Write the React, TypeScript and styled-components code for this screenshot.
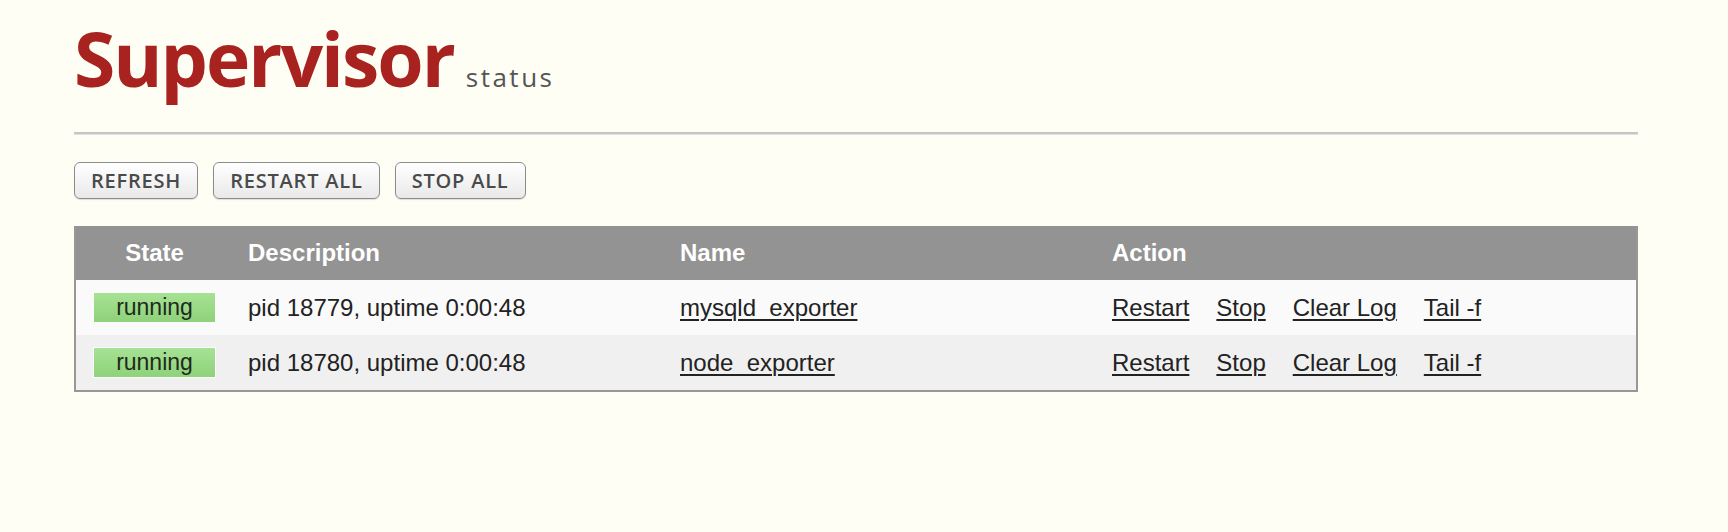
import styled, { createGlobalStyle } from 'styled-components';

const GlobalStyle = createGlobalStyle`
    html, body {
        margin: 0;
        padding: 0;
        background: #fefef4;
        font-family: "Liberation Sans", Arial, Helvetica, sans-serif;
        color: #222;
    }
`;

const Wrapper = styled.div`
    width: 1564px;
    padding: 20px 0 0 74px;
`;

const Header = styled.div`
    display: flex;
    align-items: baseline;
    height: 76px;
    line-height: 76px;
`;

const Logo = styled.span`
    font-family: "Open Sans", sans-serif;
    font-weight: 700;
    font-size: 75px;
    letter-spacing: -2px;
    color: #a8231f;
`;

const LogoSub = styled.span`
    margin-left: 12px;
    font-family: "Open Sans", sans-serif;
    font-size: 26px;
    letter-spacing: 2.5px;
    color: #555;
`;

const Rule = styled.div`
    margin-top: 36px;
    height: 2px;
    background: #c6c6c6;
    border-bottom: 1px solid #e2e2e2;
`;

const Toolbar = styled.div`
    display: flex;
    gap: 15px;
    margin-top: 27px;
`;

const ToolButton = styled.button`
    height: 37px;
    padding: 0 16px;
    border: 1.5px solid #8c8c8c;
    border-radius: 6px;
    background: linear-gradient(#ffffff, #e9e9e9);
    box-shadow: 0 1px 1px rgba(0, 0, 0, 0.12);
    font-family: "Open Sans", sans-serif;
    font-weight: 600;
    font-size: 20px;
    letter-spacing: 0.8px;
    color: #4a4a4a;
    cursor: pointer;
`;

const Table = styled.div`
    margin-top: 27px;
    border: 2px solid #979797;
    border-top: none;
`;

const Row = styled.div<{ $bg: string; $h: number }>`
    display: grid;
    grid-template-columns: 157px 432px 432px 1fr;
    align-items: center;
    height: ${(p) => p.$h}px;
    background: ${(p) => p.$bg};
    font-size: 24px;
`;

const HeadCell = styled.div<{ $center?: boolean }>`
    padding-left: ${(p) => (p.$center ? 0 : 15)}px;
    text-align: ${(p) => (p.$center ? 'center' : 'left')};
    font-weight: 700;
    color: #fff;
`;

const Cell = styled.div`
    padding-left: 15px;
    color: #222;
`;

const StateCell = styled.div`
    display: flex;
    justify-content: center;
`;

const Badge = styled.span`
    box-sizing: border-box;
    display: flex;
    align-items: center;
    justify-content: center;
    width: 123px;
    height: 31px;
    border: 1.5px solid #fdfdfd;
    background: linear-gradient(#a6e293, #8ed27a);
    font-size: 23px;
    color: #1f2a1c;
`;

const Actions = styled.div`
    display: flex;
    gap: 27px;
    padding-left: 15px;
`;

const ActionLink = styled.a`
    color: #222;
    text-decoration: underline;
    text-decoration-thickness: 2px;
    text-underline-offset: 3px;
    cursor: pointer;
`;

const processes = [
    { state: 'running', description: 'pid 18779, uptime 0:00:48', name: 'mysqld_exporter' },
    { state: 'running', description: 'pid 18780, uptime 0:00:48', name: 'node_exporter' },
];

const actions = ['Restart', 'Stop', 'Clear Log', 'Tail -f'];

export default function App() {
    return (
        <>
            <GlobalStyle />
            <Wrapper>
                <Header>
                    <Logo>Supervisor</Logo>
                    <LogoSub>status</LogoSub>
                </Header>
                <Rule />

                <Toolbar>
                    <ToolButton>REFRESH</ToolButton>
                    <ToolButton>RESTART ALL</ToolButton>
                    <ToolButton>STOP ALL</ToolButton>
                </Toolbar>

                <Table>
                    <Row $bg="#939393" $h={54}>
                        <HeadCell $center>State</HeadCell>
                        <HeadCell>Description</HeadCell>
                        <HeadCell>Name</HeadCell>
                        <HeadCell>Action</HeadCell>
                    </Row>
                    {processes.map((proc, i) => (
                        <Row key={proc.name} $bg={i % 2 ? '#f0f0f0' : '#fafafa'} $h={55}>
                            <StateCell>
                                <Badge>{proc.state}</Badge>
                            </StateCell>
                            <Cell>{proc.description}</Cell>
                            <Cell>
                                <ActionLink>{proc.name}</ActionLink>
                            </Cell>
                            <Actions>
                                {actions.map((a) => (
                                    <ActionLink key={a}>{a}</ActionLink>
                                ))}
                            </Actions>
                        </Row>
                    ))}
                </Table>
            </Wrapper>
        </>
    );
}
